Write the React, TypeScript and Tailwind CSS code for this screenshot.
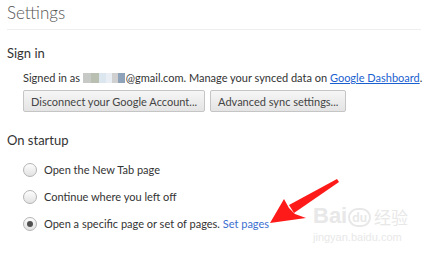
import React from 'react'

const font = { fontFamily: 'Lato, "Open Sans", Arial, sans-serif' }

function Radio({ checked }: { checked?: boolean }) {
  return (
    <span className="w-[14px] h-[14px] rounded-full border border-[#b4b4b4] bg-gradient-to-b from-[#fdfdfd] to-[#e2e2e2] flex items-center justify-center shrink-0">
      {checked && <span className="w-[6px] h-[6px] rounded-full bg-[#505050]" />}
    </span>
  )
}

function Button({ children }: { children: React.ReactNode }) {
  return (
    <button className="h-[22px] px-[7px] border border-[#c5c5c5] rounded-[2px] bg-gradient-to-b from-[#f6f6f6] to-[#e4e4e4] text-[11px] text-[#444] leading-none">
      {children}
    </button>
  )
}

export default function App() {
  return (
    <div className="relative w-[428px] h-[256px] bg-white overflow-hidden text-[#333]" style={font}>
      <div className="px-[7px]">
        {/* Header */}
        <div className="h-[30px] border-b border-[#eeeeee] pt-[1px]">
          <h1 className="text-[17px] font-light text-[#555] leading-[24px]">Settings</h1>
        </div>

        {/* Sign in */}
        <h2 className="mt-[15px] text-[13px] leading-[16px] text-[#333]">Sign in</h2>
        <div className="pl-[16px] mt-[9px] text-[11px] leading-[16px] text-[#333] whitespace-nowrap flex items-center">
          Signed in as&nbsp;
          <span className="inline-flex h-[10px] w-[42px] mr-[1px]">
            <span className="w-[8px] bg-[#c6c9c6]" />
            <span className="w-[8px] bg-[#b9c0b2]" />
            <span className="w-[7px] bg-[#dbe6ef]" />
            <span className="w-[6px] bg-[#e8eef4]" />
            <span className="w-[6px] bg-[#d0d0d0]" />
            <span className="w-[7px] bg-[#8ea3ba]" />
          </span>
          @gmail.com. Manage your synced data on&nbsp;
          <span className="text-[#1a5fd0] underline">Google Dashboard</span>.
        </div>
        <div className="pl-[16px] mt-[4px] flex gap-[5px]">
          <Button>Disconnect your Google Account...</Button>
          <Button>Advanced sync settings...</Button>
        </div>

        {/* On startup */}
        <h2 className="mt-[20px] text-[13px] leading-[16px] text-[#333]">On startup</h2>
        <div className="pl-[16px] mt-[14px] flex flex-col gap-[12px] text-[11px] leading-[15px] text-[#333]">
          <div className="flex items-center gap-[7px]">
            <Radio />
            <span>Open the New Tab page</span>
          </div>
          <div className="flex items-center gap-[7px]">
            <Radio />
            <span>Continue where you left off</span>
          </div>
          <div className="flex items-center gap-[7px]">
            <Radio checked />
            <span>
              Open a specific page or set of pages. <span className="text-[#3b6fcf]">Set pages</span>
            </span>
          </div>
        </div>
      </div>

      {/* Watermark */}
      <div className="absolute left-[313px] top-[205px] text-[#e8e8e8] select-none">
        <div className="flex items-end">
          <span className="text-[22px] font-bold leading-[22px]" style={{ fontFamily: 'Arial, sans-serif' }}>Bai</span>
          <span className="text-[13px] font-bold leading-[15px] mx-[1px] border-2 border-[#e8e8e8] rounded-full px-[2px]">du</span>
          <span className="text-[17px] leading-[20px] ml-[2px]" style={{ fontFamily: '"Noto Sans CJK SC", sans-serif' }}>经验</span>
        </div>
        <div className="text-[11px] leading-[13px] mt-[4px]" style={{ fontFamily: 'Arial, sans-serif' }}>jingyan.baidu.com</div>
      </div>

      {/* Red annotation arrow */}
      <svg className="absolute left-0 top-0" width="428" height="256" viewBox="0 0 428 256">
        <path d="M337 179 L289 205 L294 213 L339 182 Z" fill="#ff1a1a" />
        <path d="M270 223 L284 199 L289 208 L295 214 L306 218 Z" fill="#ff1a1a" />
      </svg>
    </div>
  )
}
